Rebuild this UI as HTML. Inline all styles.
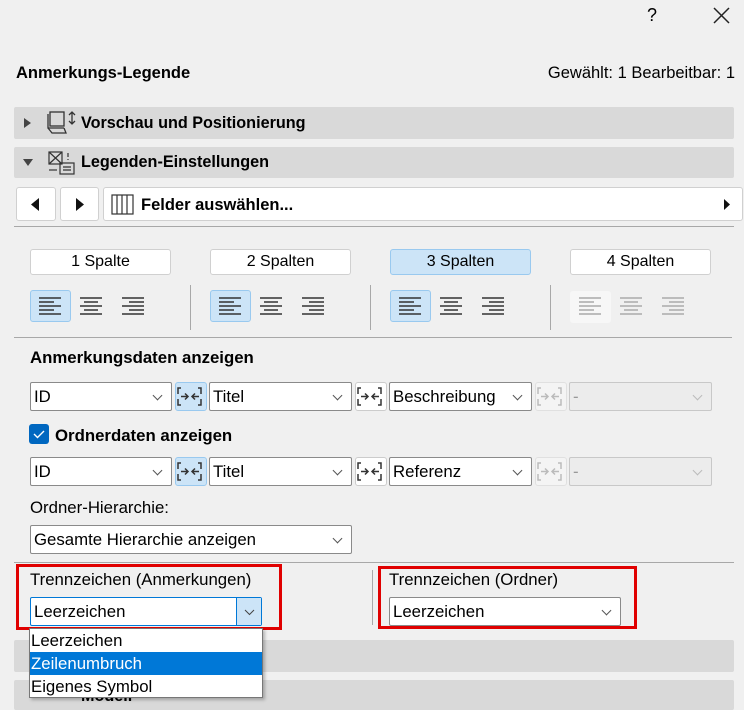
<!DOCTYPE html>
<html><head><meta charset="utf-8"><style>
*{box-sizing:border-box;margin:0;padding:0}
body{width:744px;height:703px;background:#f0f0f0;font-family:"Liberation Sans",sans-serif;font-size:15px;color:#000;position:relative;overflow:hidden}
.a{position:absolute}
.hdr{position:absolute;left:14px;width:720px;background:#d9d9d9;border-radius:2px}
.hdr b{position:absolute;left:67px;font-size:16.2px}
.btn{position:absolute;background:#fff;border:1px solid #d0d0d0;border-radius:3px;text-align:center;font-size:16px;line-height:24px}
.sel{background:#cce4f7;border-color:#99c9ef}
.dd{position:absolute;background:#fff;border:1px solid #8a8a8a;border-radius:2px;height:29px;line-height:28px;padding-left:3px;font-size:16.8px}
.dd:after{content:"";position:absolute;right:10px;top:9px;width:6px;height:6px;border-right:1px solid #555;border-bottom:1px solid #555;transform:rotate(45deg)}
.dis{background:#ececec;border-color:#c8c8c8;color:#999}
.dis:after{border-color:#bbb}
.line{position:absolute;height:1px;background:#a8a8a8}
.vl{position:absolute;width:1px;background:#a8a8a8}
.al{position:absolute;width:41px;height:32px;border-radius:3px}
.ic{position:absolute;width:32px;height:29px;border-radius:3px}
.red{position:absolute;border:3px solid #e00000}
.lb{font-size:16.8px}
</style></head><body>
<div class="a" style="left:647px;top:5px;font-size:18px">?</div>
<svg class="a" style="left:713px;top:7px" width="17" height="17"><path d="M1 1L16 16M16 1L1 16" stroke="#222" stroke-width="1.5"/></svg>
<div class="a" style="left:16px;top:64px;font-weight:bold;font-size:16.5px">Anmerkungs-Legende</div>
<div class="a" style="right:9px;top:64px;font-size:16.5px">Gewählt: 1 Bearbeitbar: 1</div>

<div class="hdr" style="top:107px;height:32px"><svg class="a" style="left:10px;top:11px" width="8" height="10"><path d="M0 0L7 5L0 10Z" fill="#444"/></svg>
<svg class="a" style="left:32px;top:3px" width="32" height="26" fill="none" stroke="#333" stroke-width="1.3"><rect x="4" y="2" width="14" height="14"/><path d="M2 4V18H18M2 18L6 23H20L18 18"/><path d="M26 2V14M23 5L26 2L29 5M23 11L26 14L29 11"/></svg><b style="top:7px">Vorschau und Positionierung</b></div>
<div class="hdr" style="top:147px;height:31px"><svg class="a" style="left:9px;top:12px" width="10" height="7"><path d="M0 0L10 0L5 7Z" fill="#444"/></svg>
<svg class="a" style="left:32px;top:3px" width="32" height="26" fill="none" stroke="#333" stroke-width="1.2"><rect x="3" y="2" width="13" height="12"/><path d="M3 2L16 14M16 2L3 14"/><rect x="14" y="13" width="14" height="11"/><path d="M17 17H25M17 20H25M22 3V7M22 9V10"/><path d="M3 20H11"/></svg><b style="top:6px">Legenden-Einstellungen</b></div>

<div class="btn" style="left:16px;top:187px;width:40px;height:34px"><svg class="a" style="left:14px;top:10px" width="9" height="13"><path d="M8 0L0 6.5L8 13Z" fill="#111"/></svg></div>
<div class="btn" style="left:60px;top:187px;width:39px;height:34px"><svg class="a" style="left:15px;top:10px" width="9" height="13"><path d="M0 0L8 6.5L0 13Z" fill="#111"/></svg></div>
<div class="btn" style="left:103px;top:187px;width:640px;height:34px;text-align:left"><svg class="a" style="left:6px;top:6px" width="26" height="22" fill="none" stroke="#333" stroke-width="1.2"><rect x="2" y="1" width="21" height="19"/><path d="M7 1V20M12 1V20M17 1V20" /></svg><b class="a" style="left:37px;top:5px;font-size:16.5px">Felder auswählen...</b><svg class="a" style="left:620px;top:11px" width="7" height="11"><path d="M0 0L6 5.5L0 11Z" fill="#111"/></svg></div>
<div class="line" style="left:14px;top:226px;width:720px"></div>

<div class="btn" style="left:30px;top:249px;width:141px;height:26px">1 Spalte</div>
<div class="btn" style="left:210px;top:249px;width:141px;height:26px">2 Spalten</div>
<div class="btn sel" style="left:390px;top:249px;width:141px;height:26px">3 Spalten</div>
<div class="btn" style="left:570px;top:249px;width:141px;height:26px">4 Spalten</div>

<div class="al sel" style="left:30px;top:290px;border:1px solid #99c9ef"></div>
<div class="al sel" style="left:210px;top:290px;border:1px solid #99c9ef"></div>
<div class="al sel" style="left:390px;top:290px;border:1px solid #99c9ef"></div>
<div class="al" style="left:570px;top:291px;background:#f7f7f7"></div>
<svg class="a" style="left:0;top:280px" width="744" height="60">
<g stroke="#333" stroke-width="1.6">
<path d="M39 18H61M39 22H54M39 26H61M39 30H54M39 34H61"/>
<path d="M80 18H102M84 22H98M80 26H102M84 30H98M80 34H102"/>
<path d="M122 18H144M129 22H144M122 26H144M129 30H144M122 34H144"/>
<path d="M219 18H241M219 22H234M219 26H241M219 30H234M219 34H241"/>
<path d="M260 18H282M264 22H278M260 26H282M264 30H278M260 34H282"/>
<path d="M302 18H324M309 22H324M302 26H324M309 30H324M302 34H324"/>
<path d="M399 18H421M399 22H414M399 26H421M399 30H414M399 34H421"/>
<path d="M440 18H462M444 22H458M440 26H462M444 30H458M440 34H462"/>
<path d="M482 18H504M489 22H504M482 26H504M489 30H504M482 34H504"/>
</g>
<g stroke="#aaa" stroke-width="1.4">
<path d="M579 18H601M579 22H594M579 26H601M579 30H594M579 34H601"/>
<path d="M620 18H642M624 22H638M620 26H642M624 30H638M620 34H642"/>
<path d="M662 18H684M669 22H684M662 26H684M669 30H684M662 34H684"/>
</g></svg>
<div class="vl" style="left:190px;top:285px;height:45px"></div>
<div class="vl" style="left:370px;top:285px;height:45px"></div>
<div class="vl" style="left:550px;top:285px;height:45px"></div>
<div class="line" style="left:14px;top:337px;width:718px"></div>

<div class="a" style="left:30px;top:348px;font-weight:bold;font-size:16.8px">Anmerkungsdaten anzeigen</div>
<div class="dd" style="left:30px;top:382px;width:142px">ID</div>
<div class="ic sel" style="left:175px;top:382px;border:1px solid #99c9ef"></div>
<div class="dd" style="left:209px;top:382px;width:143px">Titel</div>
<div class="ic" style="left:355px;top:382px;border:1px solid #ccc;background:#fff"></div>
<div class="dd" style="left:389px;top:382px;width:143px">Beschreibung</div>
<div class="ic" style="left:535px;top:382px;border:1px solid #e0e0e0;background:#f4f4f4"></div>
<div class="dd dis" style="left:569px;top:382px;width:143px">-</div>

<div class="a" style="left:29px;top:424px;width:20px;height:20px;background:#0067c0;border-radius:3px"><svg width="20" height="20"><path d="M5 10L8.5 13.5L15 7" stroke="#fff" stroke-width="1.4" fill="none"/></svg></div>
<div class="a" style="left:55px;top:426px;font-weight:bold;font-size:16.8px">Ordnerdaten anzeigen</div>
<div class="dd" style="left:30px;top:457px;width:142px">ID</div>
<div class="ic sel" style="left:175px;top:457px;border:1px solid #99c9ef"></div>
<div class="dd" style="left:209px;top:457px;width:143px">Titel</div>
<div class="ic" style="left:355px;top:457px;border:1px solid #ccc;background:#fff"></div>
<div class="dd" style="left:389px;top:457px;width:143px">Referenz</div>
<div class="ic" style="left:535px;top:457px;border:1px solid #e0e0e0;background:#f4f4f4"></div>
<div class="dd dis" style="left:569px;top:457px;width:143px">-</div>
<svg class="a" style="left:0;top:380px" width="744" height="110" fill="none" stroke-width="1.5">
<g stroke="#333"><path d="M181 8H178V14M178 19V25H181M198 8H201V14M201 19V25H198M181 16.5H188M185 13.5L188 16.5L185 19.5M199 16.5H192M195 13.5L192 16.5L195 19.5"/>
<path d="M361 8H358V14M358 19V25H361M378 8H381V14M381 19V25H378M361 16.5H368M365 13.5L368 16.5L365 19.5M379 16.5H372M375 13.5L372 16.5L375 19.5"/></g>
<g stroke="#333" transform="translate(0,75)"><path d="M181 8H178V14M178 19V25H181M198 8H201V14M201 19V25H198M181 16.5H188M185 13.5L188 16.5L185 19.5M199 16.5H192M195 13.5L192 16.5L195 19.5"/>
<path d="M361 8H358V14M358 19V25H361M378 8H381V14M381 19V25H378M361 16.5H368M365 13.5L368 16.5L365 19.5M379 16.5H372M375 13.5L372 16.5L375 19.5"/></g>
<g stroke="#bbb"><path d="M541 8H538V14M538 19V25H541M558 8H561V14M561 19V25H558M541 16.5H548M545 13.5L548 16.5L545 19.5M559 16.5H552M555 13.5L552 16.5L555 19.5"/>
<path transform="translate(0,75)" d="M541 8H538V14M538 19V25H541M558 8H561V14M561 19V25H558M541 16.5H548M545 13.5L548 16.5L545 19.5M559 16.5H552M555 13.5L552 16.5L555 19.5"/></g>
</svg>

<div class="a lb" style="left:30px;top:498px">Ordner-Hierarchie:</div>
<div class="dd" style="left:30px;top:525px;width:322px">Gesamte Hierarchie anzeigen</div>
<div class="line" style="left:14px;top:562px;width:720px"></div>
<div class="vl" style="left:372px;top:570px;height:55px"></div>

<div class="a lb" style="left:30px;top:570px">Trennzeichen (Anmerkungen)</div>
<div class="dd" style="left:30px;top:597px;width:232px;border-color:#0078d7">Leerzeichen</div>
<div class="a" style="left:236px;top:598px;width:25px;height:27px;background:#cce4f7;border-left:1px solid #0078d7"><svg width="25" height="27"><path d="M8 12L12.5 16.5L17 12" stroke="#444" fill="none"/></svg></div>
<div class="red" style="left:16px;top:564px;width:266px;height:66px"></div>
<div class="a lb" style="left:389px;top:570px">Trennzeichen (Ordner)</div>
<div class="dd" style="left:389px;top:597px;width:232px">Leerzeichen</div>
<div class="red" style="left:378px;top:566px;width:259px;height:63px"></div>

<div class="hdr" style="top:640px;height:32px"></div>
<div class="hdr" style="top:680px;height:30px"><b style="top:7px">Modell</b></div>
<div class="a" style="left:29px;top:628px;width:234px;height:70px;background:#fff;border:1px solid #777;font-size:16.8px;line-height:23px;box-shadow:2px 2px 3px rgba(0,0,0,.25)">
<div style="padding-left:1px">Leerzeichen</div>
<div style="padding-left:1px;background:#0078d7;color:#fff">Zeilenumbruch</div>
<div style="padding-left:1px">Eigenes Symbol</div></div>
</body></html>
